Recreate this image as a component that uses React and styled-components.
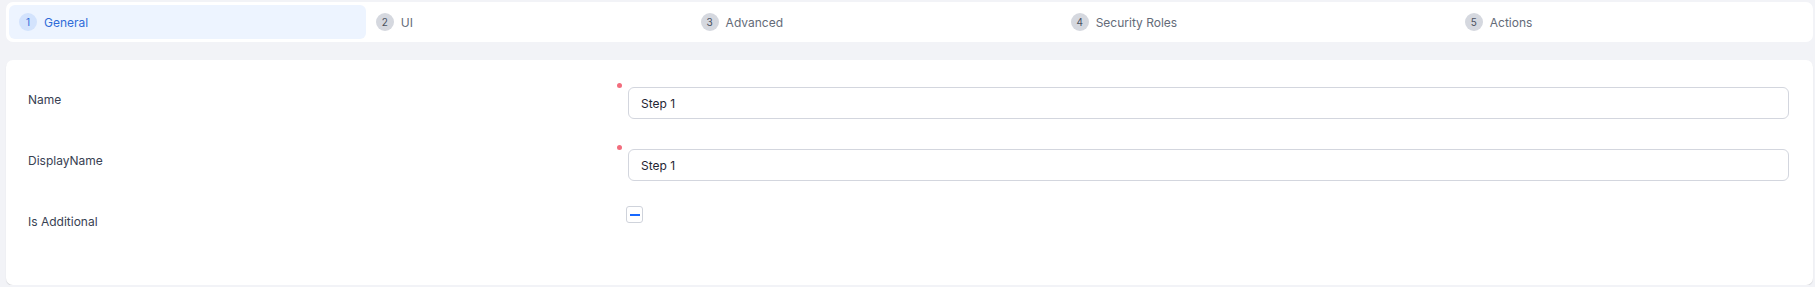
import React from 'react';
import styled, { createGlobalStyle } from 'styled-components';

const GlobalStyle = createGlobalStyle`
  html, body {
    margin: 0;
    padding: 0;
    background: #f2f3f7;
    font-family: Inter, "Noto Sans", "Liberation Sans", sans-serif;
  }
  * {
    box-sizing: border-box;
  }
`;

// Layout
const Page = styled.div`
  padding: 2px 2px 0 6px;
`;

const StepBar = styled.div`
  display: flex;
  padding: 3px;
  background: #ffffff;
  border-radius: 7px;
`;

const Step = styled.div`
  flex: 1 1 auto;
  display: flex;
  align-items: center;
  gap: 7px;
  height: 34px;
  padding: 0 10px;
  border-radius: 6px;
  background: ${(p) => (p.$active ? '#edf4ff' : 'transparent')};
  color: ${(p) => (p.$active ? '#2f6bd8' : '#646b78')};
  font-size: 12px;
  white-space: nowrap;
  cursor: pointer;
`;

const StepNumber = styled.span`
  display: inline-flex;
  align-items: center;
  justify-content: center;
  width: 18px;
  height: 18px;
  border-radius: 50%;
  font-size: 10px;
  background: ${(p) => (p.$active ? '#d3e3fd' : '#d5d8df')};
  color: ${(p) => (p.$active ? '#2f6bd8' : '#4b5260')};
`;

const Card = styled.div`
  margin-top: 18px;
  background: #ffffff;
  border-radius: 7px;
  padding: 27px 24px 53px 22px;
  box-shadow: 0 1px 1px rgba(0, 0, 0, 0.12);
  display: flex;
  flex-direction: column;
  gap: 30px;
`;

const Row = styled.div`
  display: grid;
  grid-template-columns: 585px 1fr;
  align-items: start;
`;

const Label = styled.div`
  font-size: 12px;
  line-height: 20px;
  color: #384152;
  padding-top: ${(p) => p.$offset || 0}px;
`;

const Field = styled.div`
  position: relative;
  padding-left: 15px;
`;

const RequiredDot = styled.span`
  position: absolute;
  left: 4px;
  top: -4px;
  width: 5px;
  height: 5px;
  border-radius: 50%;
  background: #f26d7d;
`;

const TextInput = styled.input`
  display: block;
  width: 100%;
  height: 32px;
  padding: 0 12px;
  border: 1px solid #d3d6de;
  border-radius: 6px;
  background: #ffffff;
  font-family: inherit;
  font-size: 12px;
  color: #1f2633;
  outline: none;
`;

const CheckBox = styled.span`
  display: flex;
  align-items: center;
  justify-content: center;
  width: 17px;
  height: 17px;
  margin-top: -5px;
  margin-left: -2px;
  border: 1px solid #cfd3db;
  border-radius: 3px;
  background: #ffffff;

  &::after {
    content: '';
    width: 10px;
    height: 2px;
    background: #1668ff;
  }
`;

const steps = ['General', 'UI', 'Advanced', 'Security Roles', 'Actions'];

export default function App() {
  return (
    <Page>
      <GlobalStyle />
      <StepBar>
        {steps.map((name, i) => (
          <Step key={name} $active={i === 0}>
            <StepNumber $active={i === 0}>{i + 1}</StepNumber>
            {name}
          </Step>
        ))}
      </StepBar>

      <Card>
        <Row>
          <Label $offset={3}>Name</Label>
          <Field>
            <RequiredDot />
            <TextInput defaultValue="Step 1" />
          </Field>
        </Row>
        <Row>
          <Label $offset={2}>DisplayName</Label>
          <Field>
            <RequiredDot />
            <TextInput defaultValue="Step 1" />
          </Field>
        </Row>
        <Row>
          <Label $offset={1}>Is Additional</Label>
          <Field>
            <CheckBox />
          </Field>
        </Row>
      </Card>
    </Page>
  );
}
